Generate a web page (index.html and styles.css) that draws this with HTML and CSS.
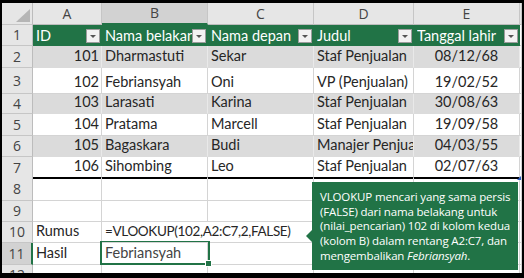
FILE: index.html
```html
<!DOCTYPE html>
<html>
<head>
<meta charset="utf-8">
<link rel="stylesheet" href="styles.css">
</head>
<body>
<div class="frame">
  <div class="sheet">
    <div class="row h-hdr">
      <div class="c rh corner"><span class="tri"></span></div>
      <div class="c ch">A</div>
      <div class="c ch sel">B</div>
      <div class="c ch">C</div>
      <div class="c ch">D</div>
      <div class="c ch">E</div>
      <div class="c ch edge"></div>
    </div>
    <div class="row h-r1 thead">
      <div class="c rh">1</div>
      <div class="c th"><span class="t">ID</span><span class="fb"></span></div>
      <div class="c th"><span class="t">Nama belakang</span><span class="fb"></span></div>
      <div class="c th"><span class="t">Nama depan</span><span class="fb"></span></div>
      <div class="c th"><span class="t">Judul</span><span class="fb"></span></div>
      <div class="c th"><span class="t">Tanggal lahir</span><span class="fb"></span></div>
      <div class="c edge"></div>
    </div>
    <div class="row h-r2 band">
      <div class="c rh">2</div>
      <div class="c num">101</div>
      <div class="c">Dharmastuti</div>
      <div class="c">Sekar</div>
      <div class="c">Staf Penjualan</div>
      <div class="c ctr">08/12/68</div>
      <div class="c edge"></div>
    </div>
    <div class="row h-r3">
      <div class="c rh">3</div>
      <div class="c num">102</div>
      <div class="c">Febriansyah</div>
      <div class="c">Oni</div>
      <div class="c">VP (Penjualan)</div>
      <div class="c ctr">19/02/52</div>
      <div class="c edge"></div>
    </div>
    <div class="row h-r4 band">
      <div class="c rh">4</div>
      <div class="c num">103</div>
      <div class="c">Larasati</div>
      <div class="c">Karina</div>
      <div class="c">Staf Penjualan</div>
      <div class="c ctr">30/08/63</div>
      <div class="c edge"></div>
    </div>
    <div class="row h-r5">
      <div class="c rh">5</div>
      <div class="c num">104</div>
      <div class="c">Pratama</div>
      <div class="c">Marcell</div>
      <div class="c">Staf Penjualan</div>
      <div class="c ctr">19/09/58</div>
      <div class="c edge"></div>
    </div>
    <div class="row h-r6 band">
      <div class="c rh">6</div>
      <div class="c num">105</div>
      <div class="c">Bagaskara</div>
      <div class="c">Budi</div>
      <div class="c">Manajer Penjualan</div>
      <div class="c ctr">04/03/55</div>
      <div class="c edge"></div>
    </div>
    <div class="row h-r7 last">
      <div class="c rh">7</div>
      <div class="c num">106</div>
      <div class="c">Sihombing</div>
      <div class="c">Leo</div>
      <div class="c">Staf Penjualan</div>
      <div class="c ctr corner-mark">02/07/63</div>
      <div class="c edge"></div>
    </div>
    <div class="row h-r8">
      <div class="c rh">8</div>
      <div class="c"></div><div class="c"></div><div class="c"></div><div class="c"></div><div class="c"></div><div class="c edge"></div>
    </div>
    <div class="row h-r9">
      <div class="c rh">9</div>
      <div class="c"></div><div class="c"></div><div class="c"></div><div class="c"></div><div class="c"></div><div class="c edge"></div>
    </div>
    <div class="row h-r10">
      <div class="c rh">10</div>
      <div class="c">Rumus</div>
      <div class="c spill">=VLOOKUP(102,A2:C7,2,FALSE)</div>
      <div class="c"></div><div class="c"></div><div class="c"></div><div class="c edge"></div>
    </div>
    <div class="row h-r11">
      <div class="c rh rsel">11</div>
      <div class="c">Hasil</div>
      <div class="c active">Febriansyah</div>
      <div class="c"></div><div class="c"></div><div class="c"></div><div class="c edge"></div>
    </div>
    <div class="row h-r12">
      <div class="c rh">12</div>
      <div class="c"></div><div class="c"></div><div class="c"></div><div class="c"></div><div class="c"></div><div class="c edge"></div>
    </div>
  </div>
  <div class="tip">VLOOKUP mencari yang sama persis<br>(FALSE) dari nama belakang untuk<br>(nilai_pencarian) 102 di kolom kedua<br>(kolom B) dalam rentang A2:C7, dan<br>mengembalikan <i>Febriansyah</i>.</div>
</div>
</body>
</html>
```

FILE: styles.css
```css
html, body {
  margin: 0;
  padding: 0;
  background: #000;
}
.frame {
  position: relative;
  margin: 3px 2px 0 2px;
  width: 520px;
  height: 270px;
  overflow: hidden;
  background: #fff;
}
.sheet {
  display: flex;
  flex-direction: column;
  font-family: "Lato", "Liberation Sans", sans-serif;
  font-size: 14.5px;
  color: #262626;
}
.row {
  display: grid;
  grid-template-columns: 31px 69px 106px 106px 100px 106px 2px;
  flex: none;
}
.h-hdr { height: 22px; }
.h-r1 { height: 21px; }
.h-r2 { height: 22px; }
.h-r3 { height: 26px; }
.h-r4 { height: 20px; }
.h-r5 { height: 22px; }
.h-r6 { height: 21px; }
.h-r7 { height: 21px; }
.h-r8 { height: 23px; }
.h-r9 { height: 21px; }
.h-r10 { height: 21px; }
.h-r11 { height: 22px; }
.h-r12 { height: 20px; }

.c {
  box-sizing: border-box;
  display: flex;
  align-items: flex-end;
  padding: 0 3px 2px 3px;
  border-right: 1px solid #d4d4d4;
  border-bottom: 1px solid #d4d4d4;
  white-space: nowrap;
  overflow: hidden;
  min-width: 0;
  line-height: 18px;
}
.num { justify-content: flex-end; padding-right: 2px; }
.ctr { justify-content: center; }
.edge { padding: 0; }

.rh, .ch {
  background: #e6e6e6;
  color: #444;
  justify-content: center;
  align-items: center;
  padding: 0;
  border-right: 1px solid #bcbcbc;
  border-bottom: 1px solid #c6c6c6;
  font-family: "Open Sans", "Liberation Sans", sans-serif;
  font-size: 14px;
}
.ch { border-right: 1px solid #c6c6c6; border-bottom: 1px solid #bcbcbc; }
.ch.sel { background: #d2d2d2; border-bottom: 2px solid #217346; }
.rh.rsel { background: #d2d2d2; border-right: 2px solid #217346; }
.corner { position: relative; }
.tri {
  position: absolute;
  right: 2px;
  bottom: 2px;
  width: 0;
  height: 0;
  border-left: 14px solid transparent;
  border-bottom: 13px solid #b5b5b5;
}

.thead .th {
  background: #217346;
  color: #fff;
  border-right: none;
  border-bottom: none;
  align-items: center;
  padding: 0 2px 0 3px;
}
.th .t {
  flex: 1;
  min-width: 0;
  overflow: hidden;
}
.fb {
  flex: none;
  position: relative;
  box-sizing: border-box;
  width: 14px;
  height: 14px;
  background: #f2f2f2;
  border: 1px solid #9c9c9c;
}
.fb::after {
  content: "";
  position: absolute;
  left: 3px;
  top: 5px;
  border-left: 3px solid transparent;
  border-right: 3px solid transparent;
  border-top: 3px solid #555;
}

.band .c:not(.rh):not(.edge) {
  background: #dbdbdb;
  border-right-color: #e9e9e9;
  border-bottom-color: #dbdbdb;
}
.last .c:not(.rh):not(.edge) {
  border-bottom: 2px solid #000;
}
.corner-mark { position: relative; overflow: visible; }
.corner-mark::after {
  content: "";
  position: absolute;
  right: -2px;
  bottom: -3px;
  width: 0;
  height: 0;
  border-left: 4px solid transparent;
  border-bottom: 4px solid #2b5bc0;
}

.spill {
  overflow: visible;
  border-right: none;
  position: relative;
  z-index: 1;
  font-size: 13.5px;
  letter-spacing: -0.35px;
}
.active { position: relative; overflow: visible; color: #444; }
.active::before {
  content: "";
  position: absolute;
  left: -2px;
  top: -2px;
  right: -3px;
  bottom: -1px;
  border: 2px solid #217346;
}
.active::after {
  content: "";
  position: absolute;
  right: -5px;
  bottom: -3px;
  width: 5px;
  height: 5px;
  background: #217346;
  border: 1px solid #fff;
}

.tip {
  position: absolute;
  left: 310px;
  top: 179px;
  width: 206px;
  height: 88px;
  box-sizing: border-box;
  padding: 8px 0 0 8px;
  background: #217346;
  color: #fff;
  font-family: "Open Sans", "Liberation Sans", sans-serif;
  font-size: 11.5px;
  letter-spacing: -0.15px;
  line-height: 14.7px;
  white-space: nowrap;
  z-index: 5;
}
.tip::before {
  content: "";
  position: absolute;
  left: -6px;
  top: 48px;
  border-top: 6px solid transparent;
  border-bottom: 6px solid transparent;
  border-right: 6px solid #217346;
}
```
